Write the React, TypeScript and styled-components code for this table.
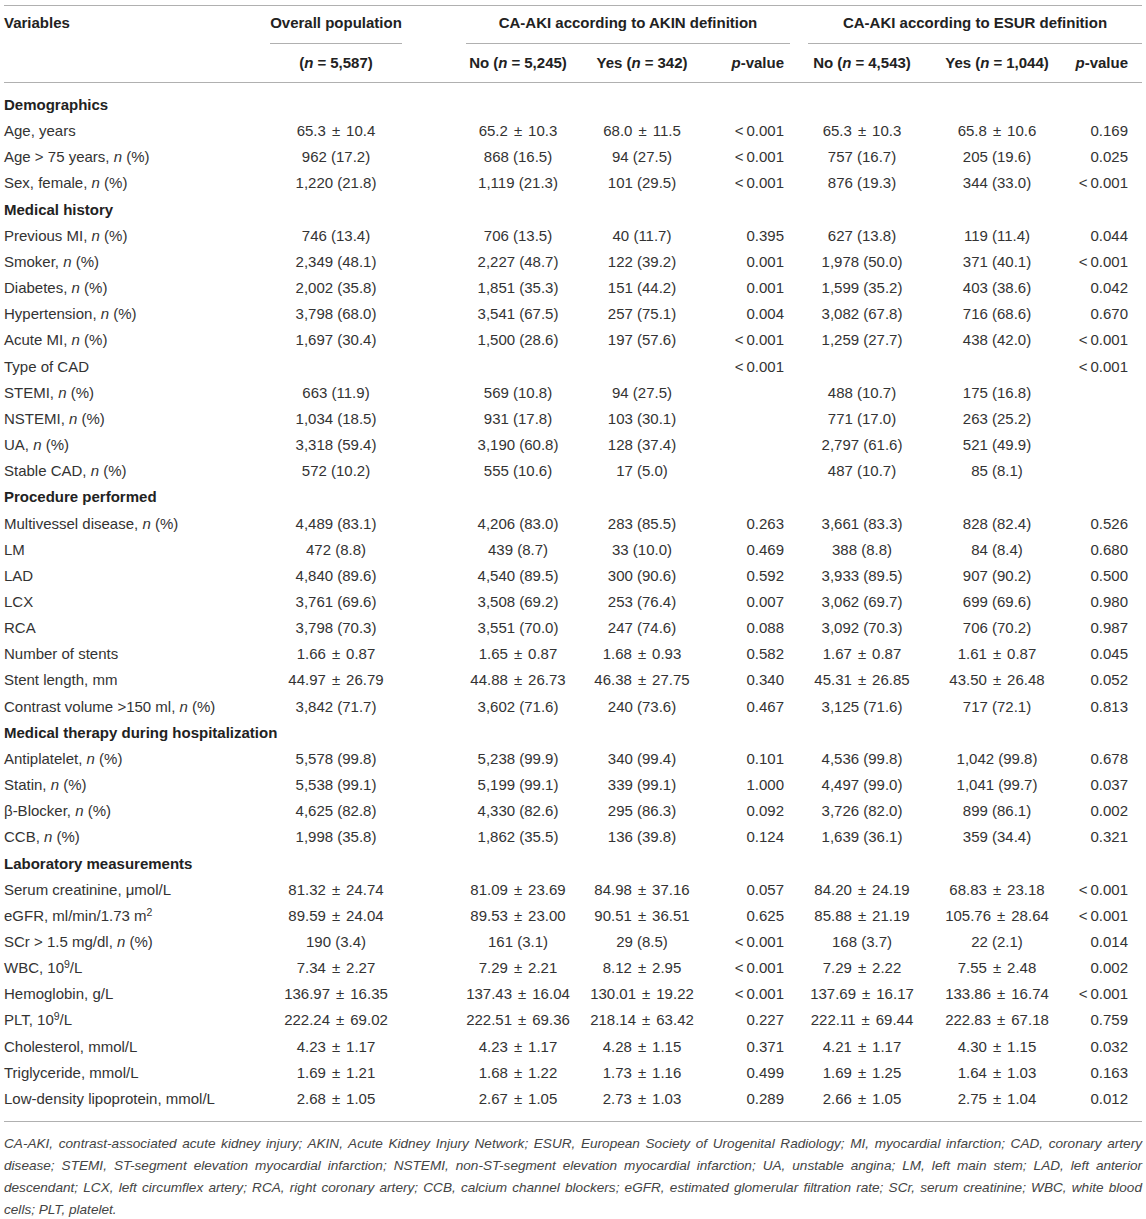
import React from 'react';
import styled, { createGlobalStyle } from 'styled-components';

const GlobalStyle = createGlobalStyle`
  body {
    margin: 0;
    background: #fff;
    font-family: "Liberation Sans", Arial, Helvetica, sans-serif;
    color: #333;
  }
`;

const Sup = styled.sup`
  font-size: 0.7em;
  line-height: 0;
  vertical-align: 0.5em;
`;

// math operators get wider side bearings than a plain space
const Op = styled.span<{ $gap: number }>`
  padding: 0 ${({ $gap }) => $gap}px;
`;

type Section = { kind: 'section'; label: string };
type Data = { kind: 'data'; label: React.ReactNode; values: string[] };
type Row = Section | Data;

const LT = '<\u20090.001';
const n = <i>n</i>;

const section = (label: string): Section => ({ kind: 'section', label });
const data = (label: React.ReactNode, ...values: string[]): Data => ({ kind: 'data', label, values });

const rows: Row[] = [
  section('Demographics'),
  data('Age, years', '65.3 ± 10.4', '65.2 ± 10.3', '68.0 ± 11.5', LT, '65.3 ± 10.3', '65.8 ± 10.6', '0.169'),
  data(<>Age &gt; 75 years, {n} (%)</>, '962 (17.2)', '868 (16.5)', '94 (27.5)', LT, '757 (16.7)', '205 (19.6)', '0.025'),
  data(<>Sex, female, {n} (%)</>, '1,220 (21.8)', '1,119 (21.3)', '101 (29.5)', LT, '876 (19.3)', '344 (33.0)', LT),
  section('Medical history'),
  data(<>Previous MI, {n} (%)</>, '746 (13.4)', '706 (13.5)', '40 (11.7)', '0.395', '627 (13.8)', '119 (11.4)', '0.044'),
  data(<>Smoker, {n} (%)</>, '2,349 (48.1)', '2,227 (48.7)', '122 (39.2)', '0.001', '1,978 (50.0)', '371 (40.1)', LT),
  data(<>Diabetes, {n} (%)</>, '2,002 (35.8)', '1,851 (35.3)', '151 (44.2)', '0.001', '1,599 (35.2)', '403 (38.6)', '0.042'),
  data(<>Hypertension, {n} (%)</>, '3,798 (68.0)', '3,541 (67.5)', '257 (75.1)', '0.004', '3,082 (67.8)', '716 (68.6)', '0.670'),
  data(<>Acute MI, {n} (%)</>, '1,697 (30.4)', '1,500 (28.6)', '197 (57.6)', LT, '1,259 (27.7)', '438 (42.0)', LT),
  data('Type of CAD', '', '', '', LT, '', '', LT),
  data(<>STEMI, {n} (%)</>, '663 (11.9)', '569 (10.8)', '94 (27.5)', '', '488 (10.7)', '175 (16.8)', ''),
  data(<>NSTEMI, {n} (%)</>, '1,034 (18.5)', '931 (17.8)', '103 (30.1)', '', '771 (17.0)', '263 (25.2)', ''),
  data(<>UA, {n} (%)</>, '3,318 (59.4)', '3,190 (60.8)', '128 (37.4)', '', '2,797 (61.6)', '521 (49.9)', ''),
  data(<>Stable CAD, {n} (%)</>, '572 (10.2)', '555 (10.6)', '17 (5.0)', '', '487 (10.7)', '85 (8.1)', ''),
  section('Procedure performed'),
  data(<>Multivessel disease, {n} (%)</>, '4,489 (83.1)', '4,206 (83.0)', '283 (85.5)', '0.263', '3,661 (83.3)', '828 (82.4)', '0.526'),
  data('LM', '472 (8.8)', '439 (8.7)', '33 (10.0)', '0.469', '388 (8.8)', '84 (8.4)', '0.680'),
  data('LAD', '4,840 (89.6)', '4,540 (89.5)', '300 (90.6)', '0.592', '3,933 (89.5)', '907 (90.2)', '0.500'),
  data('LCX', '3,761 (69.6)', '3,508 (69.2)', '253 (76.4)', '0.007', '3,062 (69.7)', '699 (69.6)', '0.980'),
  data('RCA', '3,798 (70.3)', '3,551 (70.0)', '247 (74.6)', '0.088', '3,092 (70.3)', '706 (70.2)', '0.987'),
  data('Number of stents', '1.66 ± 0.87', '1.65 ± 0.87', '1.68 ± 0.93', '0.582', '1.67 ± 0.87', '1.61 ± 0.87', '0.045'),
  data('Stent length, mm', '44.97 ± 26.79', '44.88 ± 26.73', '46.38 ± 27.75', '0.340', '45.31 ± 26.85', '43.50 ± 26.48', '0.052'),
  data(<>Contrast volume &gt;150 ml, {n} (%)</>, '3,842 (71.7)', '3,602 (71.6)', '240 (73.6)', '0.467', '3,125 (71.6)', '717 (72.1)', '0.813'),
  section('Medical therapy during hospitalization'),
  data(<>Antiplatelet, {n} (%)</>, '5,578 (99.8)', '5,238 (99.9)', '340 (99.4)', '0.101', '4,536 (99.8)', '1,042 (99.8)', '0.678'),
  data(<>Statin, {n} (%)</>, '5,538 (99.1)', '5,199 (99.1)', '339 (99.1)', '1.000', '4,497 (99.0)', '1,041 (99.7)', '0.037'),
  data(<>β-Blocker, {n} (%)</>, '4,625 (82.8)', '4,330 (82.6)', '295 (86.3)', '0.092', '3,726 (82.0)', '899 (86.1)', '0.002'),
  data(<>CCB, {n} (%)</>, '1,998 (35.8)', '1,862 (35.5)', '136 (39.8)', '0.124', '1,639 (36.1)', '359 (34.4)', '0.321'),
  section('Laboratory measurements'),
  data('Serum creatinine, μmol/L', '81.32 ± 24.74', '81.09 ± 23.69', '84.98 ± 37.16', '0.057', '84.20 ± 24.19', '68.83 ± 23.18', LT),
  data(<>eGFR, ml/min/1.73 m<Sup>2</Sup></>, '89.59 ± 24.04', '89.53 ± 23.00', '90.51 ± 36.51', '0.625', '85.88 ± 21.19', '105.76 ± 28.64', LT),
  data(<>SCr &gt; 1.5 mg/dl, {n} (%)</>, '190 (3.4)', '161 (3.1)', '29 (8.5)', LT, '168 (3.7)', '22 (2.1)', '0.014'),
  data(<>WBC, 10<Sup>9</Sup>/L</>, '7.34 ± 2.27', '7.29 ± 2.21', '8.12 ± 2.95', LT, '7.29 ± 2.22', '7.55 ± 2.48', '0.002'),
  data('Hemoglobin, g/L', '136.97 ± 16.35', '137.43 ± 16.04', '130.01 ± 19.22', LT, '137.69 ± 16.17', '133.86 ± 16.74', LT),
  data(<>PLT, 10<Sup>9</Sup>/L</>, '222.24 ± 69.02', '222.51 ± 69.36', '218.14 ± 63.42', '0.227', '222.11 ± 69.44', '222.83 ± 67.18', '0.759'),
  data('Cholesterol, mmol/L', '4.23 ± 1.17', '4.23 ± 1.17', '4.28 ± 1.15', '0.371', '4.21 ± 1.17', '4.30 ± 1.15', '0.032'),
  data('Triglyceride, mmol/L', '1.69 ± 1.21', '1.68 ± 1.22', '1.73 ± 1.16', '0.499', '1.69 ± 1.25', '1.64 ± 1.03', '0.163'),
  data('Low-density lipoprotein, mmol/L', '2.68 ± 1.05', '2.67 ± 1.05', '2.73 ± 1.03', '0.289', '2.66 ± 1.05', '2.75 ± 1.04', '0.012'),
];

// column widths, left to right; p-value columns are right aligned
const COLS = [212, 240, 124, 124, 94, 128, 142, 74];
const P_COLS = [3, 6];

function Value({ text }: { text: string }) {
  const parts = text.split(' ± ');
  if (parts.length < 2) return <>{text}</>;
  return (
    <>
      {parts[0]}
      <Op $gap={6}>±</Op>
      {parts[1]}
    </>
  );
}

function Count({ label, value }: { label?: string; value: string }) {
  return (
    <>
      {label ? `${label} ` : ''}(<i>n</i>
      <Op $gap={4}>=</Op>
      {value})
    </>
  );
}

export default function App() {
  return (
    <Page>
      <GlobalStyle />
      <Table>
        <colgroup>
          {COLS.map((w, i) => (
            <col key={i} style={{ width: w }} />
          ))}
        </colgroup>
        <thead>
          <tr>
            <HeadCell $align="left">
              <Rule $plain>Variables</Rule>
            </HeadCell>
            <HeadCell>
              <Rule $hug>Overall population</Rule>
            </HeadCell>
            <HeadCell colSpan={3} $inset="0 8px 0 10px">
              <Rule>CA-AKI according to AKIN definition</Rule>
            </HeadCell>
            <HeadCell colSpan={3} $inset="0 0 0 10px">
              <Rule>CA-AKI according to ESUR definition</Rule>
            </HeadCell>
          </tr>
          <tr>
            <SubHeadCell />
            <SubHeadCell>
              <Count value="5,587" />
            </SubHeadCell>
            <SubHeadCell>
              <Count label="No" value="5,245" />
            </SubHeadCell>
            <SubHeadCell>
              <Count label="Yes" value="342" />
            </SubHeadCell>
            <SubHeadCell $align="right">
              <i>p</i>-value
            </SubHeadCell>
            <SubHeadCell>
              <Count label="No" value="4,543" />
            </SubHeadCell>
            <SubHeadCell>
              <Count label="Yes" value="1,044" />
            </SubHeadCell>
            <SubHeadCell $align="right">
              <i>p</i>-value
            </SubHeadCell>
          </tr>
        </thead>
        <tbody>
          {rows.map((row, i) =>
            row.kind === 'section' ? (
              <BodyRow key={i}>
                <SectionCell colSpan={8}>{row.label}</SectionCell>
              </BodyRow>
            ) : (
              <BodyRow key={i}>
                <LabelCell>{row.label}</LabelCell>
                {row.values.map((v, j) => (
                  <ValueCell key={j} $align={P_COLS.includes(j) ? 'right' : 'center'}>
                    <Value text={v} />
                  </ValueCell>
                ))}
              </BodyRow>
            ),
          )}
        </tbody>
      </Table>
      <Footnote>
        CA-AKI, contrast-associated acute kidney injury; AKIN, Acute Kidney Injury Network; ESUR, European Society of
        Urogenital Radiology; MI, myocardial infarction; CAD, coronary artery disease; STEMI, ST-segment elevation
        myocardial infarction; NSTEMI, non-ST-segment elevation myocardial infarction; UA, unstable angina; LM, left main
        stem; LAD, left anterior descendant; LCX, left circumflex artery; RCA, right coronary artery; CCB, calcium channel
        blockers; eGFR, estimated glomerular filtration rate; SCr, serum creatinine; WBC, white blood cells; PLT,
        platelet.
      </Footnote>
    </Page>
  );
}

const Page = styled.div`
  width: 1138px;
  padding: 5px 4px 0;
`;

const Table = styled.table`
  width: 100%;
  table-layout: fixed;
  border-collapse: collapse;
  border-top: 1px solid #b0b0b0;
  font-size: 15px;
`;

const HeadCell = styled.th<{ $align?: 'left' | 'center'; $inset?: string }>`
  height: 38px;
  padding: ${({ $inset }) => $inset || '0'};
  text-align: ${({ $align }) => $align || 'center'};
  vertical-align: bottom;
  font-weight: bold;
  color: #222;
  line-height: 33px;
  white-space: nowrap;
`;

const Rule = styled.div<{ $hug?: boolean; $plain?: boolean }>`
  width: ${({ $hug }) => ($hug ? 'fit-content' : 'auto')};
  margin: 0 auto;
  padding-bottom: 4px;
  border-bottom: 1px solid ${({ $plain }) => ($plain ? 'transparent' : '#b0b0b0')};
`;

const SubHeadCell = styled.th<{ $align?: 'right' | 'center' }>`
  height: 38px;
  padding: ${({ $align }) => ($align === 'right' ? '0 14px 0 0' : '0')};
  text-align: ${({ $align }) => $align || 'center'};
  font-weight: bold;
  color: #222;
  line-height: 36px;
  white-space: nowrap;
  border-bottom: 1px solid #b0b0b0;
`;

const BodyRow = styled.tr`
  &:first-child > td {
    padding-top: 9px;
  }
  &:last-child > td {
    padding-bottom: 9px;
    border-bottom: 1px solid #b0b0b0;
  }
`;

const SectionCell = styled.td`
  padding: 0;
  line-height: 26.15px;
  font-weight: bold;
  color: #222;
  white-space: nowrap;
`;

const LabelCell = styled.td`
  padding: 0;
  line-height: 26.15px;
  white-space: nowrap;
  overflow: visible;
`;

const ValueCell = styled.td<{ $align: 'right' | 'center' }>`
  padding: ${({ $align }) => ($align === 'right' ? '0 14px 0 0' : '0')};
  line-height: 26.15px;
  text-align: ${({ $align }) => $align};
  white-space: nowrap;
`;

const Footnote = styled.p`
  margin: 11px 0 0;
  font-size: 13.6px;
  font-style: italic;
  line-height: 22px;
  text-align: justify;
  color: #444;
`;
